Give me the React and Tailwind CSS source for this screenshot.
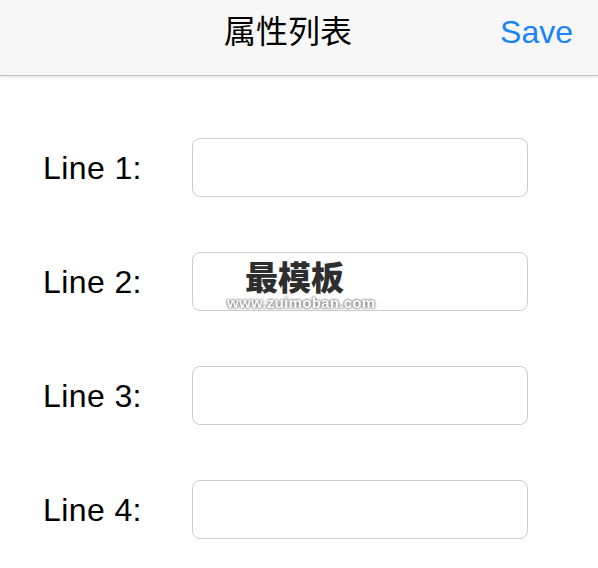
import React from "react";

const LINES = ["Line 1:", "Line 2:", "Line 3:", "Line 4:"];

const App = () => {
  return (
    <div
      className="w-[598px] h-[568px] bg-white overflow-hidden"
      style={{ fontFamily: '"Liberation Sans", "Noto Sans CJK SC", sans-serif' }}
    >
      {/* Nav bar */}
      <div className="relative h-[76px] bg-[#f7f7f7] border-b border-[#c4c4c4] shadow-[0_1px_2px_rgba(0,0,0,0.12)] flex items-center justify-center">
        <span className="text-[32px] leading-none text-black ml-[-22px] mt-[-11px]">属性列表</span>
        <span className="absolute right-[25px] top-[16px] text-[32px] leading-none text-[#1a82fb]">
          Save
        </span>
      </div>

      {/* Form rows */}
      <div className="flex flex-col gap-[55px] pt-[62px] pl-[43px]">
        {LINES.map((label, index) => (
          <div key={label} className="flex items-center">
            <span className="w-[149px] text-[32px] leading-none tracking-[0.4px] text-black">{label}</span>
            <div className="relative w-[336px] h-[59px] rounded-[8px] border border-[#cccccc] bg-white">
              {index === 1 && (
                <div className="absolute left-[34px] top-[8px] flex flex-col items-start">
                  <span
                    className="ml-[18px] text-[33px] leading-[30px] font-black text-[#2e2e2e]"
                    style={{ fontFamily: '"Noto Sans CJK SC", serif' }}
                  >
                    最模板
                  </span>
                  <span className="mt-[5px] text-[15px] leading-[13px] font-bold text-white tracking-[0.3px] [text-shadow:0_0_2px_#555,0_0_3px_#777]">
                    www.zuimoban.com
                  </span>
                </div>
              )}
            </div>
          </div>
        ))}
      </div>
    </div>
  );
};

export default App;
